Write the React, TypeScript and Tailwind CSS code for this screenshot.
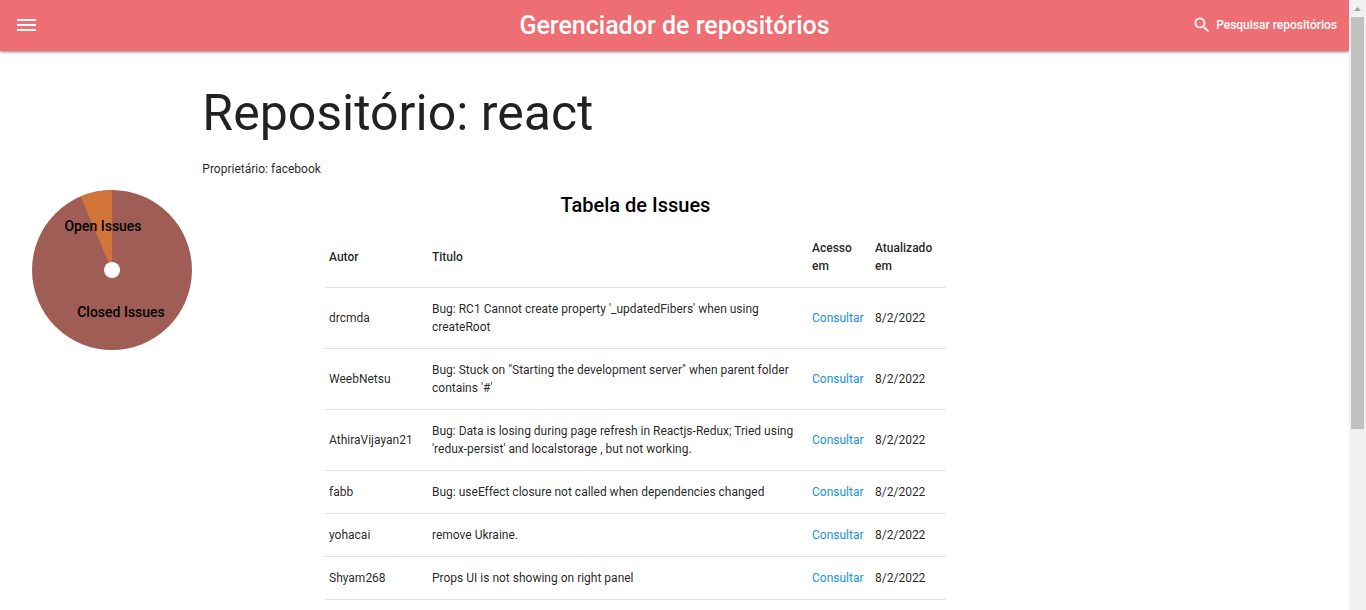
import { MdSearch } from "react-icons/md";

type Issue = { author: string; title: string; url: string; updated: string };

const REPO_ISSUES = "https://github.com/facebook/react/issues";

const issues: Issue[] = [
  { author: "drcmda", title: "Bug: RC1 Cannot create property '_updatedFibers' when using createRoot", url: REPO_ISSUES, updated: "8/2/2022" },
  { author: "WeebNetsu", title: "Bug: Stuck on \"Starting the development server\" when parent folder contains '#'", url: REPO_ISSUES, updated: "8/2/2022" },
  { author: "AthiraVijayan21", title: "Bug: Data is losing during page refresh in Reactjs-Redux; Tried using 'redux-persist' and localstorage , but not working.", url: REPO_ISSUES, updated: "8/2/2022" },
  { author: "fabb", title: "Bug: useEffect closure not called when dependencies changed", url: REPO_ISSUES, updated: "8/2/2022" },
  { author: "yohacai", title: "remove Ukraine.", url: REPO_ISSUES, updated: "8/2/2022" },
  { author: "Shyam268", title: "Props UI is not showing on right panel", url: REPO_ISSUES, updated: "8/2/2022" },
];

function Header() {
  return (
    <header className="relative z-10 grid h-[51px] shrink-0 grid-cols-[1fr_auto_1fr] items-center bg-[#ee6e73] px-3 pb-px text-white shadow-[0_1px_3px_rgba(0,0,0,0.5)]">
      <button type="button" aria-label="Menu" className="justify-self-start px-[5px]">
        <svg width="19" height="12" viewBox="0 0 19 12" fill="currentColor" className="block">
          <rect y="0" width="19" height="2" />
          <rect y="5" width="19" height="2" />
          <rect y="10" width="19" height="2" />
        </svg>
      </button>
      <span className="pt-0.5 text-[25px] leading-[48px] font-medium">Gerenciador de repositórios</span>
      <a href="#pesquisar" className="flex items-center gap-1 justify-self-end text-xs leading-[18px] font-medium">
        <MdSearch size={20} />
        Pesquisar repositórios
      </a>
    </header>
  );
}

function IssuesPie() {
  return (
    <svg width="160" height="160" viewBox="-80 -80 160 160" className="block shrink-0" role="img" aria-label="Issues">
      <circle r="80" fill="#a05d56" />
      <path d="M0 0 L0 -80 A80 80 0 0 0 -31.5 -73.5 Z" fill="#d0743c" />
      <circle r="8" fill="#fff" />
      <g className="text-sm font-medium" fill="#000" textAnchor="middle">
        <text x="-9" y="-39">Open Issues</text>
        <text x="9" y="47">Closed Issues</text>
      </g>
    </svg>
  );
}

function IssuesTable() {
  return (
    <section className="w-[621px]">
      <h2 className="pb-[7px] text-center text-xl leading-[30px] font-medium text-black">Tabela de Issues</h2>
      <table className="w-full table-fixed border-collapse text-left">
        <colgroup>
          <col className="w-[103px]" />
          <col />
          <col className="w-[63px]" />
          <col className="w-[75px]" />
        </colgroup>
        <thead>
          <tr className="border-b border-black/12">
            <th className="px-1 py-3 font-medium">Autor</th>
            <th className="px-1 py-3 font-medium">Titulo</th>
            <th className="px-1 py-3 font-medium">Acesso em</th>
            <th className="py-3 pr-3 pl-1 font-medium">Atualizado em</th>
          </tr>
        </thead>
        <tbody>
          {issues.map((issue) => (
            <tr key={issue.author} className="border-b border-black/12">
              <td className="px-1 py-3">{issue.author}</td>
              <td className="py-3 pr-3 pl-1">{issue.title}</td>
              <td className="px-1 py-3">
                <a href={issue.url} className="text-[#1890e5]">Consultar</a>
              </td>
              <td className="px-1 py-3">{issue.updated}</td>
            </tr>
          ))}
        </tbody>
      </table>
    </section>
  );
}

function Scrollbar() {
  return (
    <div aria-hidden="true" className="flex w-[17px] shrink-0 flex-col items-center bg-[#f1f1f1]">
      <div className="flex h-[17px] shrink-0 items-center">
        <svg width="7" height="4" viewBox="0 0 7 4" fill="#a3a3a3" className="block">
          <path d="M3.5 0 L7 4 H0 Z" />
        </svg>
      </div>
      <div className="h-[412px] w-[13px] bg-[#c1c1c1]" />
    </div>
  );
}

export default function App() {
  return (
    <div className="flex h-screen bg-white font-[Roboto,sans-serif] text-xs leading-[18px] text-black/87">
      <div className="flex min-w-0 flex-1 flex-col overflow-hidden">
        <Header />
        <main className="flex-1">
          <div className="mx-[15%] pt-[35px]">
            <h1 className="pb-[19px] text-[50px] leading-[55px]">Repositório: react</h1>
            <p>Proprietário: facebook</p>
          </div>
          <div className="flex items-start gap-[133px] pt-3 pl-8">
            <IssuesPie />
            <IssuesTable />
          </div>
        </main>
      </div>
      <Scrollbar />
    </div>
  );
}
